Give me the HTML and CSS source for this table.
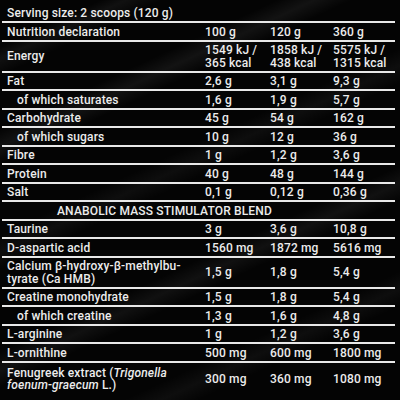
FILE: index.html
```html
<!DOCTYPE html>
<html lang="en">
<head>
    <meta charset="UTF-8">
    <meta name="viewport" content="width=device-width, initial-scale=1.0">
    <title>Nutrition Facts</title>
    <link rel="stylesheet" href="styles.css">
</head>
<body>
    <div class="label">
        <table class="facts">
            <colgroup>
                <col class="col-name">
                <col class="col-a">
                <col class="col-b">
                <col class="col-c">
            </colgroup>
            <tr class="serving">
                <td colspan="4">Serving size: 2 scoops (120 g)</td>
            </tr>
            <tr>
                <td>Nutrition declaration</td>
                <td>100 g</td>
                <td>120 g</td>
                <td>360 g</td>
            </tr>
            <tr>
                <td class="mid">Energy</td>
                <td>1549 kJ /<br>365 kcal</td>
                <td>1858 kJ /<br>438 kcal</td>
                <td>5575 kJ /<br>1315 kcal</td>
            </tr>
            <tr>
                <td>Fat</td>
                <td>2,6 g</td>
                <td>3,1 g</td>
                <td>9,3 g</td>
            </tr>
            <tr>
                <td class="sub">of which saturates</td>
                <td>1,6 g</td>
                <td>1,9 g</td>
                <td>5,7 g</td>
            </tr>
            <tr>
                <td>Carbohydrate</td>
                <td>45 g</td>
                <td>54 g</td>
                <td>162 g</td>
            </tr>
            <tr>
                <td class="sub">of which sugars</td>
                <td>10 g</td>
                <td>12 g</td>
                <td>36 g</td>
            </tr>
            <tr>
                <td>Fibre</td>
                <td>1 g</td>
                <td>1,2 g</td>
                <td>3,6 g</td>
            </tr>
            <tr>
                <td>Protein</td>
                <td>40 g</td>
                <td>48 g</td>
                <td>144 g</td>
            </tr>
            <tr>
                <td>Salt</td>
                <td>0,1 g</td>
                <td>0,12 g</td>
                <td>0,36 g</td>
            </tr>
            <tr class="blend">
                <td colspan="4">ANABOLIC MASS STIMULATOR BLEND</td>
            </tr>
            <tr>
                <td>Taurine</td>
                <td>3 g</td>
                <td>3,6 g</td>
                <td>10,8 g</td>
            </tr>
            <tr>
                <td>D-aspartic acid</td>
                <td>1560 mg</td>
                <td>1872 mg</td>
                <td>5616 mg</td>
            </tr>
            <tr>
                <td>Calcium β-hydroxy-β-methylbu-<br>tyrate (Ca HMB)</td>
                <td class="mid">1,5 g</td>
                <td class="mid">1,8 g</td>
                <td class="mid">5,4 g</td>
            </tr>
            <tr>
                <td>Creatine monohydrate</td>
                <td>1,5 g</td>
                <td>1,8 g</td>
                <td>5,4 g</td>
            </tr>
            <tr>
                <td class="sub">of which creatine</td>
                <td>1,3 g</td>
                <td>1,6 g</td>
                <td>4,8 g</td>
            </tr>
            <tr>
                <td>L-arginine</td>
                <td>1 g</td>
                <td>1,2 g</td>
                <td>3,6 g</td>
            </tr>
            <tr>
                <td>L-ornithine</td>
                <td>500 mg</td>
                <td>600 mg</td>
                <td>1800 mg</td>
            </tr>
            <tr class="last">
                <td>Fenugreek extract (<em>Trigonella</em><br><em>foenum-graecum</em> L.)</td>
                <td class="mid">300 mg</td>
                <td class="mid">360 mg</td>
                <td class="mid">1080 mg</td>
            </tr>
        </table>
    </div>
</body>
</html>
```

FILE: styles.css
```css
html, body {
    margin: 0;
    padding: 0;
    background: #040404;
}
body {
    width: 400px;
    height: 400px;
    overflow: hidden;
    font-family: 'Roboto', 'Liberation Sans', sans-serif;
    font-size: 12px;
    font-weight: 500;
    letter-spacing: 0.15px;
    color: #ececec;
    background:
        linear-gradient(155deg, transparent 8%, rgba(255, 255, 255, 0.05) 10%, transparent 13%),
        linear-gradient(155deg, transparent 22%, rgba(255, 255, 255, 0.06) 25%, transparent 28%),
        linear-gradient(155deg, transparent 40%, rgba(255, 255, 255, 0.04) 43%, transparent 46%),
        linear-gradient(155deg, transparent 60%, rgba(255, 255, 255, 0.05) 63%, transparent 66%),
        linear-gradient(155deg, transparent 78%, rgba(255, 255, 255, 0.04) 81%, transparent 84%),
        #040404;
}
.label {
    padding: 0 5px 0 2px;
}
.facts {
    width: 393px;
    border-collapse: collapse;
    table-layout: fixed;
}
.col-name {
    width: 198px;
}
.col-a {
    width: 65px;
}
.col-b {
    width: 63px;
}
.col-c {
    width: 67px;
}
.facts tr {
    border-bottom: 2px solid #e8e8e8;
}
.facts tr.last {
    border-bottom: none;
}
.facts td {
    padding: 2.5px 0 1.5px 5px;
    line-height: 12.5px;
    vertical-align: top;
    white-space: nowrap;
    overflow: visible;
}
.facts td.mid {
    vertical-align: middle;
}
.facts td.sub {
    padding-left: 15px;
}
.serving td {
    padding-top: 6.5px;
    padding-bottom: 2px;
}
.blend td {
    padding-left: 55px;
}
.last td {
    padding-top: 4px;
}
em {
    font-style: italic;
}
```
